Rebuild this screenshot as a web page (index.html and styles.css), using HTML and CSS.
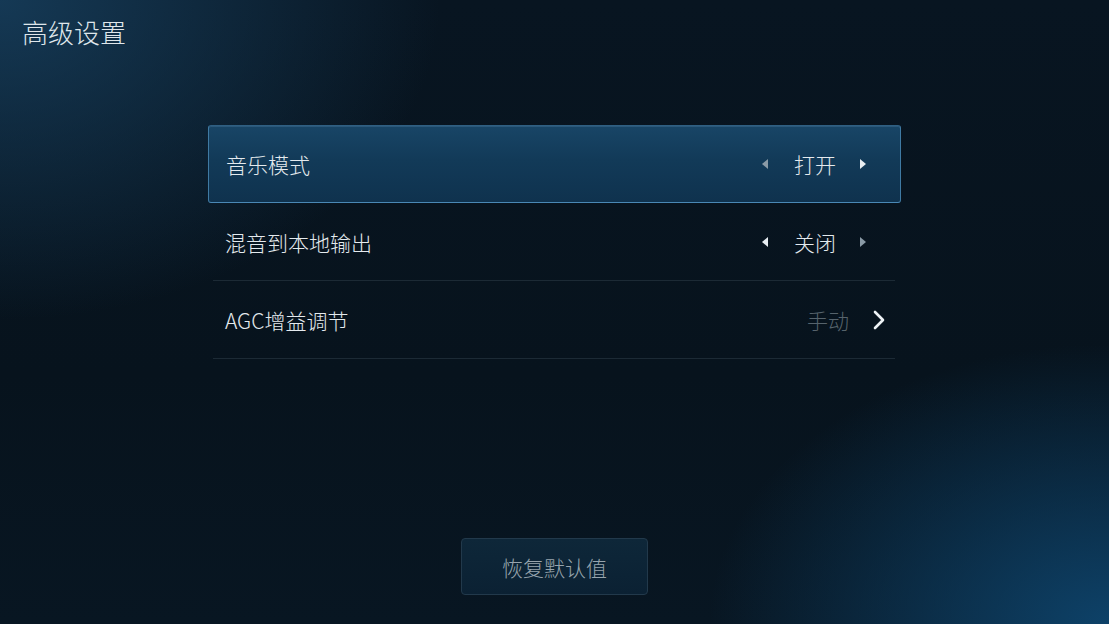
FILE: index.html
```html
<!DOCTYPE html>
<html lang="zh-CN">
<head>
  <meta charset="UTF-8">
  <title>高级设置</title>
  <link rel="stylesheet" href="styles.css">
</head>
<body>
<div class="screen">
  <h1 class="title">高级设置</h1>

  <div class="list">
    <div class="row active">
      <span class="label">音乐模式</span>
      <span class="picker">
        <span class="tri left dim"></span>
        <span class="value">打开</span>
        <span class="tri right"></span>
      </span>
    </div>
    <div class="row">
      <span class="label">混音到本地输出</span>
      <span class="picker">
        <span class="tri left"></span>
        <span class="value">关闭</span>
        <span class="tri right dim"></span>
      </span>
    </div>
    <div class="row">
      <span class="label">AGC增益调节</span>
      <span class="link">
        <span class="value muted">手动</span>
        <svg class="chevron" width="14" height="22" viewBox="0 0 14 22">
          <path d="M3 3 L11 11 L3 19" fill="none" stroke="#eef3f6" stroke-width="2.6" stroke-linecap="round" stroke-linejoin="round"/>
        </svg>
      </span>
    </div>
  </div>

  <div class="footer">
    <div class="btn">恢复默认值</div>
  </div>
</div>
</body>
</html>
```

FILE: styles.css
```css
html, body {
  margin: 0;
  padding: 0;
}

body {
  font-family: "Noto Sans CJK SC", "Liberation Sans", sans-serif;
  font-weight: 300;
  background-color: #07121c;
}

.screen {
  width: 1109px;
  height: 624px;
  overflow: hidden;
  display: flex;
  flex-direction: column;
  background:
    radial-gradient(ellipse 440px 320px at 0 0, rgba(24, 66, 98, 0.8), rgba(24, 66, 98, 0) 100%),
    radial-gradient(ellipse 400px 280px at 100% 100%, rgba(14, 68, 108, 0.95), rgba(14, 68, 108, 0) 100%),
    linear-gradient(180deg, #081521 0%, #07131d 60%, #081622 100%);
}

.title {
  margin: 0;
  padding: 14px 0 0 22px;
  font-size: 26px;
  font-weight: 300;
  line-height: 36px;
  color: #dfe6eb;
}

.list {
  margin: 75px 0 0 208px;
  width: 693px;
}

.row {
  height: 78px;
  margin: 0 6px 0 5px;
  padding: 0 13px 0 12px;
  display: flex;
  align-items: center;
  justify-content: space-between;
  border-bottom: 1px solid #1c2a35;
  color: #e4eaee;
  font-size: 21px;
  box-sizing: border-box;
}

.row.active {
  margin: 0;
  padding: 0 18px 0 17px;
  border: 1px solid #3f7aa3;
  border-top-color: #2f5f82;
  border-bottom-color: #4a88b5;
  border-radius: 3px;
  background: linear-gradient(180deg, #184566 0%, #123a58 45%, #0f324e 100%);
  box-shadow: inset 0 1px 0 rgba(120, 170, 210, 0.2);
}

.picker {
  display: flex;
  align-items: center;
  margin-right: 16px;
}

.tri {
  width: 0;
  height: 0;
  border-top: 5px solid transparent;
  border-bottom: 5px solid transparent;
}

.tri.left {
  border-right: 6px solid #e8eef2;
}

.tri.right {
  border-left: 6px solid #e8eef2;
}

.tri.dim.left {
  border-right-color: #8a9aa6;
}

.tri.dim.right {
  border-left-color: #8a9aa6;
}

.value {
  margin: 0 24px 0 26px;
}

.link {
  display: flex;
  align-items: center;
  margin-right: -4px;
}

.value.muted {
  margin: 0 23px 0 0;
  color: #56636c;
}

.chevron {
  display: block;
}

.footer {
  margin-top: 179px;
  display: flex;
  justify-content: center;
}

.btn {
  width: 187px;
  height: 57px;
  box-sizing: border-box;
  border: 1px solid #22394b;
  border-radius: 4px;
  background: linear-gradient(180deg, #0e2739 0%, #0b2133 100%);
  color: #97a4ad;
  font-size: 21px;
  display: flex;
  align-items: center;
  justify-content: center;
}
```
